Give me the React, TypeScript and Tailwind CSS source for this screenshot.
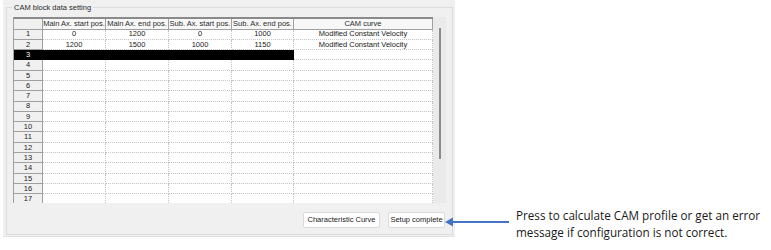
import React from "react";

// ─── Data ─────────────────────────────────────────────────────────────────────

type CamRow = { ms: string; me: string; ss: string; se: string; curve: string };

const HEADERS = ["Main Ax. start pos.", "Main Ax. end pos.", "Sub. Ax. start pos.", "Sub. Ax. end pos.", "CAM curve"];

const ROWS: CamRow[] = [
  { ms: "0",    me: "1200", ss: "0",    se: "1000", curve: "Modified Constant Velocity" },
  { ms: "1200", me: "1500", ss: "1000", se: "1150", curve: "Modified Constant Velocity" },
  ...Array.from({ length: 15 }, () => ({ ms: "", me: "", ss: "", se: "", curve: "" }))
];

const SELECTED = 2;

const COLS = "grid grid-cols-[29px_63px_63px_63px_62px_139px]";

// ─── Table ────────────────────────────────────────────────────────────────────

function HeaderRow() {
  return (
    <div className={`${COLS} h-[13px] border-t-2 border-[#8a8a8a]`}>
      <div className="border-r border-b border-[#a0a0a0] bg-[#f0f0f0]" />
      {HEADERS.map((h) => (
        <div
          key={h}
          className="flex items-center justify-center border-r border-b border-[#a0a0a0] bg-[#f7f7f7] text-[7.5px] leading-none text-[#2a2a2a]"
        >
          {h}
        </div>
      ))}
    </div>
  );
}

function BodyRow({ row, index }: { row: CamRow; index: number }) {
  const sel = index === SELECTED;
  const cells = [row.ms, row.me, row.ss, row.se];
  return (
    <div className={`${COLS} h-[10.3px]`}>
      <div
        className={`flex items-center justify-center border-r border-b text-[7.5px] leading-none ${
          sel ? "border-black bg-black text-white" : "border-[#a0a0a0] bg-[#f0f0f0] text-[#222]"
        }`}
      >
        {index + 1}
      </div>
      {cells.map((c, i) => (
        <div
          key={i}
          className={`flex items-center justify-center border-r border-b border-dotted text-[7.5px] leading-none ${
            sel ? "border-black bg-black" : "border-[#c4c4c4] bg-white text-[#1a1a1a]"
          }`}
        >
          {c}
        </div>
      ))}
      <div className="flex items-center justify-center border-r border-b border-dotted border-[#c4c4c4] bg-white text-[7.5px] leading-none text-[#1a1a1a]">
        {row.curve}
      </div>
    </div>
  );
}

// ─── Panel ────────────────────────────────────────────────────────────────────

function CamPanel() {
  return (
    <div className="ml-[3px] h-[237px] w-[452px] shrink-0 border-b border-[#e2e2e2] bg-[#f0f0f0] px-[3px] pt-[4px]">
      <fieldset className="h-[231px] border border-[#dcdcdc] px-[6px]">
        <legend className="ml-[-1px] px-[2px] text-[7.5px] leading-none text-[#2a2a2a]">CAM block data setting</legend>

        <div className="mt-[5px] flex h-[186px]">
          <div className="h-full w-[420px] overflow-hidden border-l border-[#a0a0a0] bg-white">
            <HeaderRow />
            {ROWS.map((r, i) => (
              <BodyRow key={i} row={r} index={i} />
            ))}
          </div>
          {/* Scrollbar */}
          <div className="flex h-full w-[13px] justify-center bg-[#eaeaea] pt-[11px]">
            <div className="h-[131px] w-[2px] bg-[#8c8c8c]" />
          </div>
        </div>

        <div className="mt-[9px] flex justify-end gap-[8px] pr-[1px]">
          <button
            type="button"
            className="h-[16px] w-[77px] rounded-[2px] border border-[#dadada] bg-white text-[7.5px] leading-none text-[#1a1a1a]"
          >
            Characteristic Curve
          </button>
          <button
            type="button"
            className="h-[16px] w-[57px] rounded-[2px] border border-[#dadada] bg-white text-[7.5px] leading-none text-[#1a1a1a]"
          >
            Setup complete
          </button>
        </div>
      </fieldset>
    </div>
  );
}

export default function App() {
  return (
    <div className="relative flex h-[250px] w-[771px] bg-white font-['Liberation_Sans',Arial,sans-serif]">
      <CamPanel />

      {/* Callout arrow */}
      <svg className="absolute left-[445px] top-[216px]" width="66" height="12" viewBox="0 0 66 12">
        <line x1="6" y1="6" x2="64" y2="6" stroke="#4472c4" strokeWidth="2" />
        <polygon points="0,6 8,1.5 8,10.5" fill="#4472c4" />
      </svg>

      <div className="ml-[61px] self-end pb-[9px] font-['Open_Sans',sans-serif] text-[11.7px] leading-[17px] text-[#1a1a1a]">
        <p>Press to calculate CAM profile or get an error</p>
        <p>message if configuration is not correct.</p>
      </div>
    </div>
  );
}
